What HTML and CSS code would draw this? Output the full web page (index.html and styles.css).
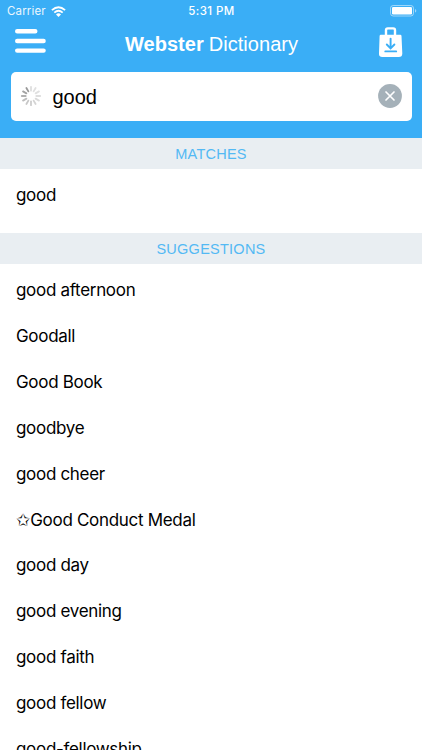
FILE: index.html
```html
<!DOCTYPE html>
<html lang="en">
<head>
<meta charset="utf-8">
<title>Webster Dictionary</title>
<link rel="stylesheet" href="styles.css">
</head>
<body>
<header class="header">
  <div class="status">
    <div class="status-left"><span class="carrier">Carrier</span>
      <svg class="wifi" width="15" height="11" viewBox="0 0 15 11"><g fill="none" stroke="#fff" stroke-width="1.8"><path d="M.9 4.2Q7.5-1.8 14.1 4.2"/><path d="M3.3 6.7Q7.5 2.9 11.7 6.7"/></g><path d="M5 8.4Q7.5 6.3 10 8.4L7.5 10.9Z" fill="#fff"/></svg>
    </div>
    <span class="time">5:31 PM</span>
    <svg class="battery" width="27" height="12" viewBox="0 0 27 12"><rect x=".5" y=".5" width="23" height="10.5" rx="2.7" fill="none" stroke="#fff" stroke-opacity=".5"/><rect x="2" y="2" width="20" height="7.5" rx="1.3" fill="#fff"/><path d="M25 4Q26.3 4.4 26.3 5.8T25 7.6Z" fill="#fff" fill-opacity=".5"/></svg>
  </div>
  <div class="nav">
    <svg class="menu" width="31" height="25" viewBox="0 0 31 25"><path d="M2.2 2.3H20.3M2.2 12H28.6M2.2 21.6H28.6" fill="none" stroke="#fff" stroke-width="4.4" stroke-linecap="round"/></svg>
    <h1 class="title"><b>Webster</b> <span>Dictionary</span></h1>
    <svg class="bag" width="24" height="31" viewBox="0 0 24 31"><path d="M7 9V3.2Q7 1.4 8.8 1.4H14.2Q16 1.4 16 3.2V9" fill="none" stroke="#fff" stroke-width="2.4"/><path d="M1.8 7.7H21.2Q22.4 7.7 22.5 8.9L23.3 26.5Q23.3 30 19.8 30H3.2Q-.2 30 0 26.5L.6 8.9Q.7 7.7 1.8 7.7Z" fill="#fff"/><path d="M11.6 11.6V21M7.8 17.5L11.6 21.3L15.4 17.5M6.3 24.4H17.2" fill="none" stroke="#3aaef6" stroke-width="1.9" stroke-linecap="round"/></svg>
  </div>
  <div class="search">
    <svg class="spinner" width="22" height="22" viewBox="-11 -11 22 22"><g stroke-width="1.8" stroke-linecap="round"><path d="M0-5.3V-9.2" stroke="#dedede"/><path d="M0-5.3V-9.2" stroke="#e0e0e0" transform="rotate(30)"/><path d="M0-5.3V-9.2" stroke="#e0e0e0" transform="rotate(60)"/><path d="M0-5.3V-9.2" stroke="#dedede" transform="rotate(90)"/><path d="M0-5.3V-9.2" stroke="#dadada" transform="rotate(120)"/><path d="M0-5.3V-9.2" stroke="#d4d4d4" transform="rotate(150)"/><path d="M0-5.3V-9.2" stroke="#cecece" transform="rotate(180)"/><path d="M0-5.3V-9.2" stroke="#c7c7c7" transform="rotate(210)"/><path d="M0-5.3V-9.2" stroke="#bdbdbd" transform="rotate(240)"/><path d="M0-5.3V-9.2" stroke="#b0b0b0" transform="rotate(270)"/><path d="M0-5.3V-9.2" stroke="#a3a3a3" transform="rotate(300)"/><path d="M0-5.3V-9.2" stroke="#999" transform="rotate(330)"/></g></svg>
    <span class="query">good</span>
    <svg class="clear" width="24" height="24" viewBox="0 0 24 24"><circle cx="12" cy="12" r="11.9" fill="#a5b1b9"/><path d="M8 8L16 16M16 8L8 16" stroke="#fff" stroke-width="1.7" stroke-linecap="round"/></svg>
  </div>
</header>
<main>
  <h2 class="section">MATCHES</h2>
  <ul class="list matches"><li>good</li></ul>
  <h2 class="section">SUGGESTIONS</h2>
  <ul class="list suggestions">
    <li>good afternoon</li>
    <li>Goodall</li>
    <li>Good Book</li>
    <li>goodbye</li>
    <li>good cheer</li>
    <li><span class="star">✩</span>Good Conduct Medal</li>
    <li>good day</li>
    <li>good evening</li>
    <li>good faith</li>
    <li>good fellow</li>
    <li>good-fellowship</li>
  </ul>
</main>
</body>
</html>
```
FILE: styles.css
```css
* { box-sizing: border-box; }
body {
  margin: 0;
  height: 750px;
  overflow: hidden;
  background: #fff;
  color: #000;
  font-family: Inter, "Liberation Sans", sans-serif;
}
svg { display: block; flex: none; }
.header { height: 138px; background: #3aaef6; color: #fff; }
.status {
  display: grid;
  grid-template-columns: 1fr auto 1fr;
  align-items: center;
  height: 22px;
  padding: 0 6px 0 7px;
  font-size: 11.5px;
}
.status-left { display: flex; align-items: center; gap: 5px; }
.carrier { letter-spacing: 0.15px; opacity: 0.9; }
.time { font-weight: 500; letter-spacing: 0.4px; }
.battery { justify-self: end; margin-right: -1px; }
.nav {
  display: flex;
  align-items: center;
  justify-content: space-between;
  height: 38px;
  padding: 0 19px 0 15px;
}
.title {
  display: flex;
  gap: 5px;
  margin: 5px 2px 0 0;
  font: 400 20px/24px "Liberation Sans", sans-serif;
  letter-spacing: 0.04px;
}
.bag { margin-top: 3px; }
.search {
  display: flex;
  align-items: center;
  height: 49px;
  margin: 12px 10.5px 0;
  padding: 0 10px 0 9px;
  border-radius: 5px;
  background: #fff;
  color: #000;
}
.spinner, .clear { margin-top: -1px; }
.query { flex: 1; margin-left: 11px; font: 20px/24px "Liberation Sans", sans-serif; }
.section {
  height: 31px;
  margin: 0;
  background: #e9eef2;
  color: #53b9f4;
  font: 400 14.5px/32px "Liberation Sans", sans-serif;
  letter-spacing: 0.25px;
  text-align: center;
}
.list { margin: 0; padding: 0; list-style: none; font-size: 17px; letter-spacing: -0.31px; }
.list li { height: 45.85px; padding-left: 16px; line-height: 45.85px; white-space: nowrap; }
.matches { height: 64px; padding-top: 4.4px; }
.suggestions { padding-top: 4.4px; }
.star { font: 17px/1 "DejaVu Sans", sans-serif; letter-spacing: 0; }
```
